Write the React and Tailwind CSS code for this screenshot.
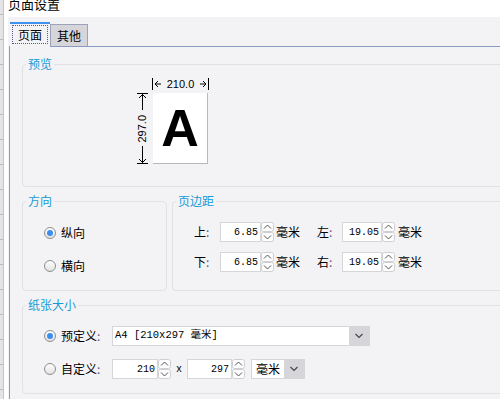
import React from "react";

const cjk = { fontFamily: '"Noto Sans CJK SC", "Noto Sans", sans-serif' };
const mono = { fontFamily: '"Liberation Mono", "Noto Sans CJK SC", monospace' };

function Radio({ checked }) {
  return (
    <div className="w-[12px] h-[12px] rounded-full border border-[#8d8d8d] bg-gradient-to-b from-[#ffffff] to-[#e2e2e2] flex items-center justify-center shrink-0">
      {checked && <div className="w-[6px] h-[6px] rounded-full bg-[#3b8ef0]" />}
    </div>
  );
}

function Spinner() {
  return (
    <svg width="13" height="20" viewBox="0 0 13 20" className="shrink-0">
      <rect x="0.5" y="0.5" width="12" height="9" rx="2" fill="#fdfdfd" stroke="#cfcfd3" />
      <rect x="0.5" y="10.5" width="12" height="9" rx="2" fill="#fdfdfd" stroke="#cfcfd3" />
      <path d="M3 6.5 L6.5 3 L10 6.5" fill="none" stroke="#555" strokeWidth="1" />
      <path d="M3 13.5 L6.5 17 L10 13.5" fill="none" stroke="#555" strokeWidth="1" />
    </svg>
  );
}

function NumInput({ value, w }) {
  return (
    <div className="flex items-center">
      <div
        className={`${w} h-[20px] bg-white border border-[#d6d6d8] flex items-center justify-end pr-[2px] text-[10px] text-black`}
        style={mono}
      >
        {value}
      </div>
      <Spinner />
    </div>
  );
}

function Chevron() {
  return (
    <svg width="10" height="6" viewBox="0 0 10 6">
      <path d="M1.5 1 L5 4.5 L8.5 1" fill="none" stroke="#444" strokeWidth="1.1" />
    </svg>
  );
}

function Group({ title, className, children }) {
  return (
    <fieldset className={`border border-[#e1e1e5] rounded-[4px] shrink-0 ${className}`}>
      <legend className="ml-[3px] px-[2px] text-[12px] leading-[16px] text-[#169bd7]" style={cjk}>
        {title}
      </legend>
      {children}
    </fieldset>
  );
}

function Label({ text }) {
  return (
    <span className="text-[12px] text-black">
      {text}
      <span className="text-[#6b4a86]">:</span>
    </span>
  );
}

export default function App() {
  const lines = Array.from({ length: 16 });
  return (
    <div className="w-[500px] h-[399px] flex overflow-hidden bg-white" style={cjk}>
      {/* spreadsheet strip behind dialog */}
      <div className="w-[4px] h-full bg-[#e4e4e4] border-r border-[#c4c4c4] flex flex-col shrink-0">
        <div className="h-[15px] border-b border-[#bdbdbd] shrink-0" />
        {lines.map((_, i) => (
          <div key={i} className="h-[25px] border-b border-[#bdbdbd] shrink-0" />
        ))}
      </div>
      <div className="w-[4px] bg-white shrink-0" />

      <div className="flex-1 flex flex-col min-w-0">
        <div className="h-[17px] bg-white overflow-hidden shrink-0">
          <div className="-mt-[4px] text-[13px] leading-[16px] text-black">页面设置</div>
        </div>

        <div className="flex-1 bg-[#f3f3f6] pl-[1px] pt-[5px] flex flex-col min-h-0">
          {/* tabs */}
          <div className="h-[24px] flex items-start pl-[1px] relative z-10 shrink-0">
            <div className="w-[40px] h-[25px] bg-[#f3f3f6] border-t-2 border-[#3d93ee] px-[2px] pt-[1px] pb-[3px]">
              <div className="h-[19px] border border-dotted border-[#5a5a90] flex items-center justify-center text-[12px] text-black">
                页面
              </div>
            </div>
            <div className="mt-[2px] w-[38px] h-[22px] bg-[#d5d5da] border border-b-0 border-[#9aa3b9] flex items-center justify-center text-[12px] text-black">
              其他
            </div>
          </div>

          <div className="flex-1 border-t border-l border-[#8a9bc0] pl-[12px] pt-[9px] overflow-hidden flex flex-col gap-[6px] min-h-0">
            {/* preview */}
            <Group title="预览" className="w-[500px] h-[131px]">
              <div className="ml-[114px] mt-[6px] flex flex-col">
                <div className="ml-[15px] w-[57px] h-[12px] flex items-center justify-between text-[11px] leading-[12px] text-black" style={{ fontFamily: '"Liberation Sans", sans-serif' }}>
                  <svg width="10" height="12" viewBox="0 0 10 12">
                    <path d="M0.5 0 V12" stroke="#000" />
                    <path d="M6 3 L3 6 L6 9 M3 6 H9" fill="none" stroke="#000" />
                  </svg>
                  <span>210.0</span>
                  <svg width="10" height="12" viewBox="0 0 10 12">
                    <path d="M9.5 0 V12" stroke="#000" />
                    <path d="M4 3 L7 6 L4 9 M1 6 H7" fill="none" stroke="#000" />
                  </svg>
                </div>
                <div className="flex mt-[3px]">
                  <div className="w-[11px] h-[71px] flex flex-col items-center justify-between">
                    <svg width="11" height="18" viewBox="0 0 11 18">
                      <path d="M0 0.5 H11" stroke="#000" />
                      <path d="M5.5 1 V17 M2 5 L5.5 1.5 L9 5" fill="none" stroke="#000" />
                    </svg>
                    <span
                      className="[writing-mode:vertical-rl] rotate-180 text-[11px] leading-[11px] text-black"
                      style={{ fontFamily: '"Liberation Sans", sans-serif' }}
                    >
                      297.0
                    </span>
                    <svg width="11" height="18" viewBox="0 0 11 18">
                      <path d="M0 17.5 H11" stroke="#000" />
                      <path d="M5.5 0 V17 M2 13 L5.5 16.5 L9 13" fill="none" stroke="#000" />
                    </svg>
                  </div>
                  <div
                    className="ml-[5px] w-[55px] h-[71px] bg-white border-r border-b border-[#b8b8b8] flex items-center justify-center text-[52px] leading-[52px] font-bold text-black"
                    style={{ fontFamily: '"Liberation Sans", Arial, sans-serif' }}
                  >
                    A
                  </div>
                </div>
              </div>
            </Group>

            <div className="flex gap-[5px] shrink-0">
              {/* orientation */}
              <Group title="方向" className="w-[145px] h-[98px]">
                <div className="pl-[21px] pt-[14px] flex flex-col gap-[13px]">
                  <div className="h-[20px] flex items-center gap-[5px] text-[12px] text-black">
                    <Radio checked />
                    纵向
                  </div>
                  <div className="h-[20px] flex items-center gap-[5px] text-[12px] text-black">
                    <Radio />
                    横向
                  </div>
                </div>
              </Group>

              {/* margins */}
              <Group title="页边距" className="w-[340px] h-[98px]">
                <div className="pl-[21px] pt-[13px] flex flex-col gap-[10px]">
                  {[
                    ["上", "6.85", "左", "19.05"],
                    ["下", "6.85", "右", "19.05"],
                  ].map(([a, av, b, bv]) => (
                    <div key={a} className="h-[20px] flex items-center text-[12px] text-black">
                      <div className="w-[26px]">
                        <Label text={a} />
                      </div>
                      <NumInput value={av} w="w-[41px]" />
                      <span className="ml-[2px] w-[41px]">毫米</span>
                      <div className="w-[25px]">
                        <Label text={b} />
                      </div>
                      <NumInput value={bv} w="w-[40px]" />
                      <span className="ml-[3px]">毫米</span>
                    </div>
                  ))}
                </div>
              </Group>
            </div>

            {/* paper size */}
            <Group title="纸张大小" className="w-[500px] h-[97px]">
              <div className="pl-[21px] pt-[13px] flex flex-col gap-[13px]">
                <div className="h-[20px] flex items-center text-[12px] text-black">
                  <Radio checked />
                  <div className="ml-[5px] w-[51px]">
                    <Label text="预定义" />
                  </div>
                  <div className="w-[258px] h-[20px] flex border border-[#d6d6d8]">
                    <div className="flex-1 bg-white flex items-center pl-[2px] text-[10.5px]" style={mono}>
                      A4 [210x297 毫米]
                    </div>
                    <div className="w-[20px] bg-[#d6d6da] flex items-center justify-center">
                      <Chevron />
                    </div>
                  </div>
                </div>
                <div className="h-[20px] flex items-center text-[12px] text-black">
                  <Radio />
                  <div className="ml-[5px] w-[51px]">
                    <Label text="自定义" />
                  </div>
                  <NumInput value="210" w="w-[46px]" />
                  <span className="w-[16px] text-center text-[10px]" style={mono}>
                    x
                  </span>
                  <NumInput value="297" w="w-[45px]" />
                  <div className="ml-[6px] w-[54px] h-[20px] flex border border-[#d6d6d8]">
                    <div className="flex-1 bg-white flex items-center justify-center text-[12px]">毫米</div>
                    <div className="w-[20px] bg-[#d6d6da] flex items-center justify-center">
                      <Chevron />
                    </div>
                  </div>
                </div>
              </div>
            </Group>
          </div>
        </div>
      </div>
    </div>
  );
}
